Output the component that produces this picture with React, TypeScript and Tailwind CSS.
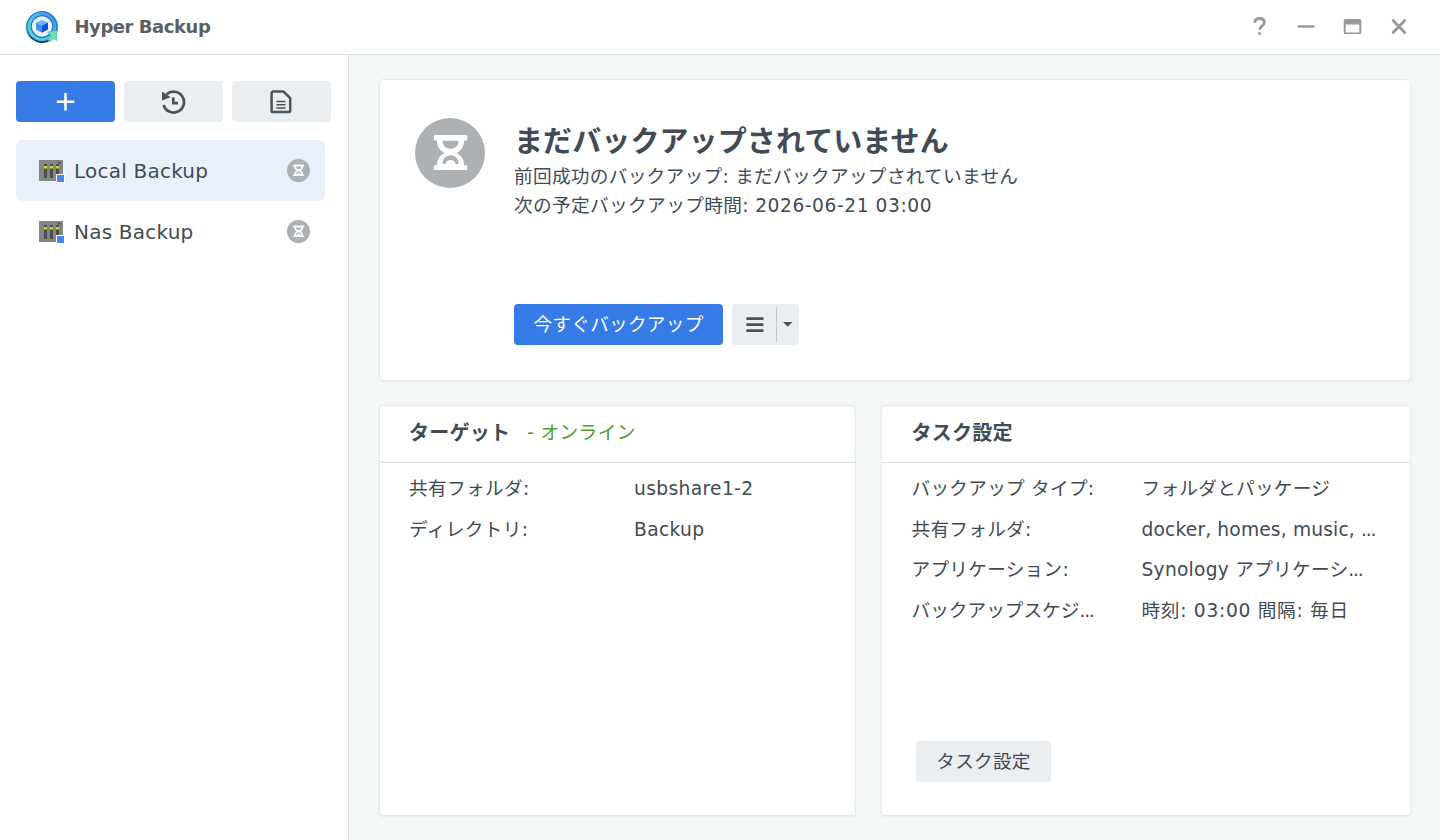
import React from 'react'

const HourglassBadge = ({ className }: { className: string }) => {
  return (
    <svg className={className} viewBox="0 0 70 70">
      <circle cx="35" cy="35" r="35" fill="#adb1b4" />
      <path
        fill="#fff"
        d="M19.800 17h31.500a1 1 0 0 1 1 1v3.500a1 1 0 0 1-1 1h-2.200c0 6.500-3.300 10.500-7.800 12.500 4.500 2 7.800 6 7.800 12.300h2.200a1 1 0 0 1 1 1V51a1 1 0 0 1-1 1H19.800a1 1 0 0 1-1-1v-2.700a1 1 0 0 1 1-1H22c0-6.300 3.300-10.300 7.800-12.300-4.500-2-7.800-6-7.800-12.500h-2.200a1 1 0 0 1-1-1V18a1 1 0 0 1 1-1z"
      />
      <path fill="#adb1b4" d="M27.500 22.700h16.100c0 5-3.300 8-8 8s-8.100-3-8.100-8z" />
      <path
        fill="#adb1b4"
        d="M27.500 46c0-5 3.300-8.700 8.100-8.700s8 3.700 8 8.700h-2.800c-.8-2.500-2.600-4-5.200-4s-4.500 1.500-5.300 4z"
      />
    </svg>
  )
}

const Logo = () => {
  return (
    <svg className="w-[34px] h-[34px] mb-px" viewBox="0 0 34 34">
      <defs>
        <linearGradient id="ring" x1="0" y1="0" x2="0" y2="1">
          <stop offset="0" stopColor="#2a5fdc" />
          <stop offset="0.55" stopColor="#2189d0" />
          <stop offset="1" stopColor="#17386f" />
        </linearGradient>
        <linearGradient id="arc" x1="1" y1="0" x2="0" y2="1">
          <stop offset="0" stopColor="#3c86ee" />
          <stop offset="0.5" stopColor="#4fc4e6" />
          <stop offset="1" stopColor="#55dccb" />
        </linearGradient>
      </defs>
      <circle cx="17" cy="17" r="16" fill="url(#ring)" />
      <circle cx="17" cy="16.500" r="12.800" fill="none" stroke="url(#arc)" strokeWidth="3.200" />
      <circle cx="17" cy="16.500" r="11" fill="#2a66c4" />
      <circle cx="17" cy="16.500" r="10.200" fill="#eaf3fd" />
      <path fill="#69b5fa" d="M17 10l6 2.600-6 2.800-6-2.800z" />
      <path fill="#438af2" d="M11 12.600l6 2.800v7.400l-6-3.200z" />
      <path fill="#1c4fd8" d="M23 12.600l-6 2.800v7.400l6-3.200z" />
      <path fill="#6be0b0" stroke="#2a9c9c" strokeWidth=".5" d="M22.500 22l9.500-1.700-.3 10.500-2.700-2.300-4.300 3.300-2-2.500 3.300-3.800z" />
    </svg>
  )
}

const NasIcon = () => {
  return (
    <svg className="w-[26px] h-6 shrink-0 mt-px" viewBox="0 0 26 24">
      <path fill="#858585" d="M0 1h24v21H0z" />
      <path fill="#4d4d4d" d="M5 5h3v14H5zM11 5h3v14h-3zM17 5h3v14h-3zM19 3h3v1.500h-3z" />
      <path fill="#c0da30" d="M5 7h3v2.500H5zM11 7h3v2.500h-3zM17 7h3v2.500h-3z" />
      <path fill="#fff" d="M17 15h9v9h-9z" />
      <path fill="#4b84e4" d="M18 16h7v7h-7z" />
    </svg>
  )
}

const Dots = () => <span className="tracking-[-1.2px]">...</span>

const Task = ({ name, active }: { name: string; active?: boolean }) => {
  return (
    <div
      className={
        active
          ? 'flex items-center h-[61px] pl-[23px] pr-[15px] rounded-md bg-[#e9f0fc]'
          : 'flex items-center h-[61px] pl-[23px] pr-[15px]'
      }
    >
      <NasIcon />
      <p className="grow ml-[9px] text-[20px] leading-6 tracking-[0.22px]">{name}</p>
      <HourglassBadge className="w-[23px] h-[23px]" />
    </div>
  )
}

const Row = ({ label, value, wide }: { label: React.ReactNode; value: React.ReactNode; wide?: boolean }) => {
  return (
    <div className="flex h-[40.700px] items-center">
      <p className={wide ? 'w-[230px] shrink-0' : 'w-[225px] shrink-0'}>{label}</p>
      <p className="whitespace-nowrap">{value}</p>
    </div>
  )
}

function App() {
  return (
    <div className="w-[1440px] h-[840px] flex flex-col overflow-hidden bg-white text-[#414b55] font-['DejaVu_Sans','Noto_Sans_CJK_JP',sans-serif]">
      <header className="h-[55px] shrink-0 flex items-center justify-between border-b border-[#dfe2e4] pl-[25px] pr-[33px]">
        <div className="flex items-center">
          <Logo />
          <p className="ml-[15.500px] pb-0.5 text-[18px] font-bold tracking-[-0.45px] text-[#5b6065]">Hyper Backup</p>
        </div>
        <svg className="w-[158px] h-[22px] mb-px" viewBox="0 0 158 22" fill="none" stroke="#96999d" strokeWidth="2.800">
          <path d="M5.900 6.700c0-2.700 2-4.200 4.700-4.200s4.700 1.500 4.700 4c0 3.400-4.700 3.600-4.700 7.300" />
          <circle cx="10.600" cy="17.500" r="1.500" fill="#96999d" stroke="none" />
          <path strokeLinecap="round" strokeWidth="2.500" d="M49.800 10.500h14.600" />
          <path fill="#96999d" stroke="none" fillRule="evenodd" d="M96.200 3h14.600a1.500 1.500 0 0 1 1.500 1.500v12a1.500 1.500 0 0 1-1.500 1.500H96.200a1.500 1.500 0 0 1-1.500-1.500v-12A1.500 1.500 0 0 1 96.200 3zm.5 5.500v8h13.600v-8z" />
          <path strokeLinecap="round" d="M144.200 4.500l11.500 12M155.700 4.500l-11.500 12" />
        </svg>
      </header>

      <div className="flex grow">
        <aside className="w-[349px] shrink-0 border-r border-[#e0e4e7] pt-[26px] pl-4">
          <div className="flex gap-[9px] *:w-[99px] *:h-[41px] *:rounded *:flex *:items-center *:justify-center">
            <button className="bg-[#377ce6]">
              <svg className="w-5 h-5" viewBox="0 0 20 20" stroke="#fff" strokeWidth="2.600">
                <path d="M9.500 1v17.500M.8 9.800h17.500" />
              </svg>
            </button>
            <button className="bg-[#ebeef1]">
              <svg className="w-6 h-6" viewBox="0 0 24 24" fill="none" stroke="#4c5358" strokeWidth="2.700">
                <path d="M1.600 15A10.400 10.400 0 1 0 4.500 4.500" />
                <path fill="#4c5358" stroke="none" d="M0 1.600l8.600 5.700L0 10.400z" />
                <path d="M11.300 7.500v5.700h4.700" />
              </svg>
            </button>
            <button className="bg-[#ebeef1]">
              <svg className="w-6 h-6" viewBox="0 0 24 24" fill="none" stroke="#4c5358">
                <path strokeWidth="2.500" strokeLinejoin="round" d="M3.200 1.600h10.400l6.600 6.600v12.300a1.600 1.600 0 0 1-1.600 1.600H3.200a1.600 1.600 0 0 1-1.600-1.600V3.200a1.600 1.600 0 0 1 1.600-1.600z" />
                <path strokeWidth="1.500" d="M6.500 11.500h9M6.500 14.700h9M6.500 17.900h9" />
              </svg>
            </button>
          </div>
          <div className="mt-[18px] w-[309px]">
            <Task name="Local Backup" active />
            <Task name="Nas Backup" />
          </div>
        </aside>

        <main className="grow bg-[#f3f7f8] pt-6 pl-[29.500px] pr-[29.500px] text-[18.670px] tracking-[0.25px]">
          <section className="h-[302px] rounded border border-[#e6eaec] bg-white flex pl-[35.500px] pt-[38px] shadow-xs">
            <HourglassBadge className="w-[70px] h-[70px] shrink-0" />
            <div className="ml-[29px]">
              <h1 className="mt-[5px] text-[29px] leading-[39px] tracking-[0.1px] font-bold">まだバックアップされていません</h1>
              <p className="leading-[30px] tracking-[0.29px]">前回成功のバックアップ: まだバックアップされていません</p>
              <p className="leading-[28px] tracking-[0.36px]">
                次の予定バックアップ時間: <span className="tracking-[0.55px]">2026-06-21 03:00</span>
              </p>
              <div className="mt-[84px] flex gap-[9px]">
                <button className="w-[209px] h-[41px] rounded bg-[#377ce6] text-white">今すぐバックアップ</button>
                <button className="w-[67px] h-[41px] rounded bg-[#ebeef1] flex items-center">
                  <svg className="w-[67px] h-[41px]" viewBox="0 0 67 41">
                    <path stroke="#4c5358" strokeWidth="2.800" strokeLinecap="round" d="M15.500 14.700h14.800M15.500 20.700h14.800M15.500 26.700h14.800" />
                    <path stroke="#c6cacd" d="M44.500 3v35" />
                    <path fill="#4c5358" d="M51 18h9.500l-4.700 4.800z" />
                  </svg>
                </button>
              </div>
            </div>
          </section>

          <div className="mt-6 flex gap-[25px]">
            <section className="w-[477.500px] h-[411px] rounded border border-[#e6eaec] bg-white shadow-xs">
              <h2 className="h-[57px] flex items-center px-[29.500px] pb-[3px] border-b border-[#d9dfe3] text-[20px] font-bold">
                ターゲット
                <span className="ml-[17px] text-[18.670px] font-normal tracking-[0.35px] text-[#4ba12b]">- オンライン</span>
              </h2>
              <div className="pl-[29.500px] pt-[5.500px] tracking-[0.35px]">
                <Row label="共有フォルダ:" value="usbshare1-2" />
                <Row label="ディレクトリ:" value="Backup" />
              </div>
            </section>
            <section className="w-[529.500px] h-[411px] rounded border border-[#e6eaec] bg-white shadow-xs">
              <h2 className="h-[57px] flex items-center px-[29.500px] pb-[3px] border-b border-[#d9dfe3] text-[20px] font-bold">
                タスク設定
              </h2>
              <div className="pl-[29.500px] pt-[5.500px]">
                <Row wide label="バックアップ タイプ:" value="フォルダとパッケージ" />
                <Row
                  wide
                  label="共有フォルダ:"
                  value={<span className="tracking-[0.15px]">docker, homes, music, <Dots /></span>}
                />
                <Row wide label="アプリケーション:" value={<>Synology アプリケーシ<Dots /></>} />
                <Row
                  wide
                  label={<span className="tracking-normal">バックアップスケジ<Dots /></span>}
                  value={<span className="tracking-[0.7px]">時刻: 03:00 間隔: 毎日</span>}
                />
              </div>
              <button className="mt-[110px] ml-[34px] w-[135px] h-[41px] rounded bg-[#ebeef1]">タスク設定</button>
            </section>
          </div>
        </main>
      </div>
    </div>
  )
}

export default App
